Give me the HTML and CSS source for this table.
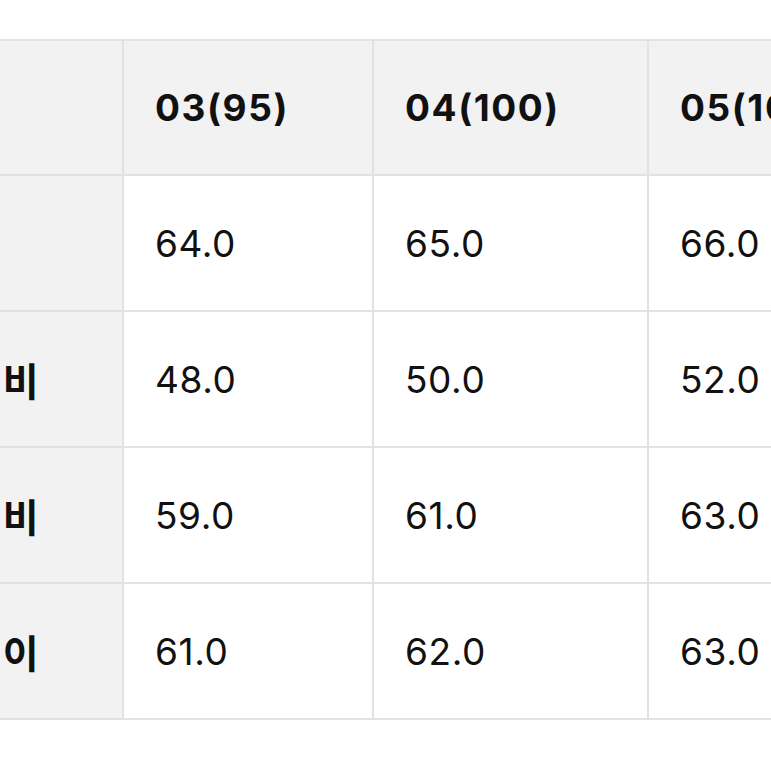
FILE: index.html
```html
<!DOCTYPE html>
<html lang="ko">
<head>
<meta charset="utf-8">
<link rel="stylesheet" href="styles.css">
</head>
<body>
<div class="frame">
  <table class="size-table">
    <colgroup>
      <col class="c-label">
      <col class="c-a">
      <col class="c-b">
      <col class="c-c">
    </colgroup>
    <thead>
      <tr class="head-row">
        <th class="label"></th>
        <th>03(95)</th>
        <th>04(100)</th>
        <th>05(100)</th>
      </tr>
    </thead>
    <tbody>
      <tr><th class="label">총장</th><td>64.0</td><td>65.0</td><td>66.0</td></tr>
      <tr><th class="label">어깨너비</th><td>48.0</td><td>50.0</td><td>52.0</td></tr>
      <tr><th class="label">가슴너비</th><td>59.0</td><td>61.0</td><td>63.0</td></tr>
      <tr><th class="label">소매길이</th><td>61.0</td><td>62.0</td><td>63.0</td></tr>
    </tbody>
  </table>
</div>
</body>
</html>
```
FILE: styles.css
```css
html, body {
  margin: 0;
  padding: 0;
  background: #ffffff;
}
.frame {
  width: 771px;
  height: 771px;
  overflow: hidden;
  padding-top: 39px;
  box-sizing: border-box;
}
.size-table {
  border-collapse: collapse;
  table-layout: fixed;
  width: 1070px;
  margin-left: -147px;
  font-family: "Inter", "Noto Sans CJK KR", sans-serif;
  font-size: 37px;
  color: #111111;
}
.c-label { width: 269px; }
.c-a { width: 250px; }
.c-b { width: 275px; }
.c-c { width: 276px; }
.size-table th,
.size-table td {
  height: 136px;
  padding: 0 0 0 31px;
  border: 2px solid #e2e2e2;
  text-align: left;
  vertical-align: middle;
  white-space: nowrap;
  box-sizing: border-box;
}
.size-table .head-row th {
  height: 135px;
}
.size-table td {
  font-weight: 400;
  letter-spacing: 0.6px;
  background: #ffffff;
}
.size-table thead th {
  background: #f2f2f2;
  font-weight: 700;
  letter-spacing: 1.6px;
}
.size-table th.label {
  background: #f2f2f2;
  padding-left: 40px;
  font-family: "Noto Sans CJK KR", sans-serif;
  font-size: 39px;
  font-weight: 700;
  letter-spacing: 0;
}
```
